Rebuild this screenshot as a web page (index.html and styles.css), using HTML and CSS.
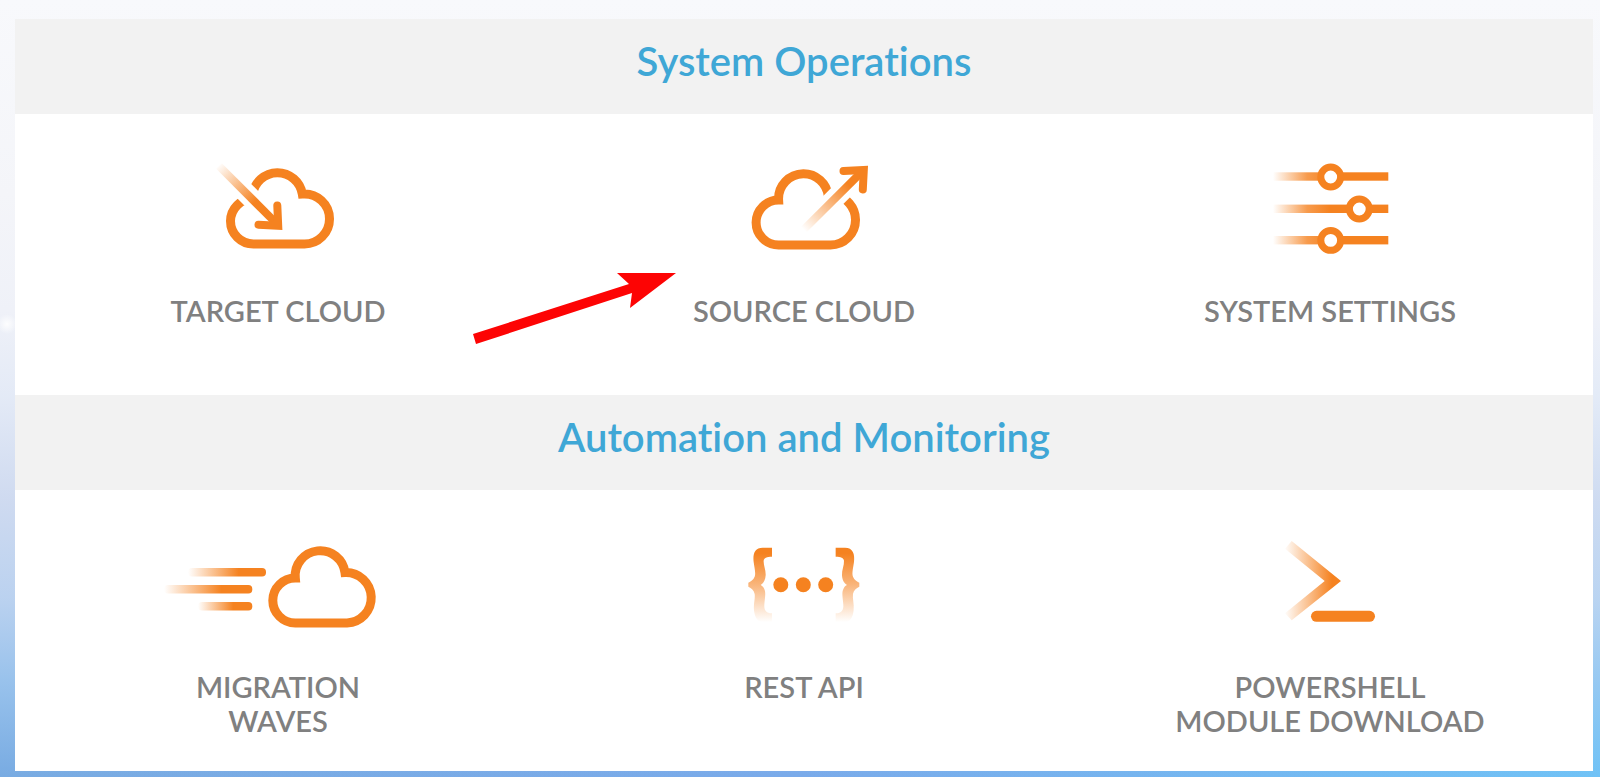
FILE: index.html
```
<!DOCTYPE html>
<html lang="en">
  <head>
    <meta charset="UTF-8" />
    <meta name="viewport" content="width=device-width, initial-scale=1.0" />
    <title>System Operations</title>
    <link rel="stylesheet" href="styles.css">
  </head>

  <body>
    <main class="panel">
      <!-- System Operations -->
      <section>
        <h2 class="section-title">System Operations</h2>
        <div class="tiles">
          <a class="tile" href="#target-cloud">
            <svg class="icon" viewBox="0 0 240 110" aria-hidden="true">
              <defs>
                <linearGradient id="arrow-in" gradientUnits="userSpaceOnUse" x1="60" y1="11" x2="97" y2="48">
                  <stop offset="0" stop-color="#f58220" stop-opacity="0" />
                  <stop offset="1" stop-color="#f58220" />
                </linearGradient>
              </defs>
              <path class="line" d="M95 44.5A23 23 0 0 0 72.5 67A23 23 0 0 0 95.5 90H146.5A25 25 0 0 0 171.5 65A25 25 0 0 0 144.3 40A25.3 25.3 0 0 0 119.3 18.7A25.3 25.3 0 0 0 94.5 41" />
              <!-- Gap for the arrow -->
              <path class="gap" d="M75 26L104 55" />
              <path d="M61 12L120 71" fill="none" stroke="url(#arrow-in)" stroke-width="8" />
              <path class="head" d="M119.3 51.5L120.2 71.8L100.5 70.7" />
            </svg>
            <span class="label">TARGET CLOUD</span>
          </a>

          <a class="tile" href="#source-cloud">
            <svg class="icon" viewBox="0 0 240 110" aria-hidden="true">
              <defs>
                <linearGradient id="arrow-out" gradientUnits="userSpaceOnUse" x1="120" y1="76" x2="165" y2="31">
                  <stop offset="0" stop-color="#f58220" stop-opacity="0" />
                  <stop offset="1" stop-color="#f58220" />
                </linearGradient>
              </defs>
              <path class="line" d="M150 41A25 25 0 0 1 171.5 66A25 25 0 0 1 146.5 91H94.6A22.5 22.5 0 0 1 94.6 46A25 25 0 0 1 119.3 19.7A25 25 0 0 1 144.3 42" />
              <!-- Gap for the arrow -->
              <path class="gap" d="M134 61.3L164 31.3" />
              <path d="M119.3 76L179 16.7" fill="none" stroke="url(#arrow-out)" stroke-width="8" />
              <path class="head" d="M159.5 17L179.8 16L178.8 35.5" />
            </svg>
            <span class="label">SOURCE CLOUD</span>
            <!-- Pointer to the tile -->
            <svg class="pointer" viewBox="0 0 208 76" aria-hidden="true">
              <path d="M2 64L158 14L146 3H205L159 38L161 23L5 74Z" fill="#fd0404" />
            </svg>
          </a>

          <a class="tile" href="#system-settings">
            <svg class="icon" viewBox="0 0 240 110" aria-hidden="true">
              <defs>
                <linearGradient id="slider" gradientUnits="userSpaceOnUse" x1="63" y1="0" x2="120" y2="0">
                  <stop offset="0" stop-color="#f58220" stop-opacity="0" />
                  <stop offset="0.6" stop-color="#f58220" stop-opacity="0.8" />
                  <stop offset="1" stop-color="#f58220" />
                </linearGradient>
              </defs>
              <g fill="url(#slider)">
                <rect x="63" y="18.3" width="115.3" height="8.4" />
                <rect x="63" y="50.6" width="115.3" height="8.4" />
                <rect x="63" y="82" width="115.3" height="8.4" />
              </g>
              <g class="knob">
                <circle cx="120.7" cy="23" r="9.9" />
                <circle cx="149.3" cy="55" r="9.9" />
                <circle cx="120.7" cy="86.4" r="9.9" />
              </g>
            </svg>
            <span class="label">SYSTEM SETTINGS</span>
          </a>
        </div>
      </section>

      <!-- Automation and Monitoring -->
      <section>
        <h2 class="section-title">Automation and Monitoring</h2>
        <div class="tiles">
          <a class="tile" href="#migration-waves">
            <svg class="icon" viewBox="0 0 240 110" aria-hidden="true">
              <defs>
                <linearGradient id="wave">
                  <stop offset="0" stop-color="#f58220" stop-opacity="0" />
                  <stop offset="0.65" stop-color="#f58220" />
                </linearGradient>
              </defs>
              <path class="line" d="M137.3 48A22.5 22.5 0 0 0 137.3 93H189A25.2 25.2 0 0 0 187 42.6A25 25 0 0 0 137.3 48Z" />
              <g fill="url(#wave)">
                <rect x="30" y="38" width="78" height="8.4" rx="4" />
                <rect x="6" y="55" width="88.3" height="8.4" rx="4" />
                <rect x="40" y="72" width="54.3" height="8.4" rx="4" />
              </g>
            </svg>
            <span class="label">MIGRATION<br />WAVES</span>
          </a>

          <a class="tile" href="#rest-api">
            <svg class="icon" viewBox="0 0 240 110" aria-hidden="true">
              <defs>
                <linearGradient id="brace" gradientUnits="userSpaceOnUse" x1="0" y1="70" x2="0" y2="276">
                  <stop offset="0" stop-color="#f58220" />
                  <stop offset="0.45" stop-color="#f58220" stop-opacity="0.6" />
                  <stop offset="1" stop-color="#f58220" stop-opacity="0" />
                </linearGradient>
                <path id="brace-shape" d="M156 53H128C104 53 98 72 101 96C103 112 108 130 104 140C100 150 92 154 85 158V170C94 174 102 180 104 192C106 206 100 222 102 240C104 262 112 276 130 276H156V250C138 250 132 240 133 224C134 208 138 190 134 180C131 172 128 168 122 165C130 160 136 152 137 136C138 120 130 106 131 92C132 84 140 80 156 80Z" />
              </defs>
              <g transform="translate(36 0) scale(0.3333)" fill="url(#brace)">
                <use href="#brace-shape" />
                <use href="#brace-shape" transform="translate(503 0) scale(-1 1)" />
              </g>
              <g fill="#f58220">
                <circle cx="96.8" cy="54.8" r="7.5" />
                <circle cx="119.3" cy="54.8" r="7.5" />
                <circle cx="141.7" cy="54.8" r="7.5" />
              </g>
            </svg>
            <span class="label">REST API</span>
          </a>

          <a class="tile" href="#powershell">
            <svg class="icon" viewBox="0 0 240 110" aria-hidden="true">
              <defs>
                <linearGradient id="prompt" gradientUnits="userSpaceOnUse" x1="74" y1="0" x2="122" y2="0">
                  <stop offset="0" stop-color="#f58220" stop-opacity="0" />
                  <stop offset="1" stop-color="#f58220" />
                </linearGradient>
              </defs>
              <path d="M81.7 11L131 51L81.7 90.3L75 83.3L114.7 51L75 18.7Z" fill="url(#prompt)" />
              <rect x="101" y="80.8" width="64" height="11" rx="5.5" fill="#f58220" />
            </svg>
            <span class="label">POWERSHELL<br />MODULE DOWNLOAD</span>
          </a>
        </div>
      </section>
    </main>
  </body>
</html>
```
FILE: styles.css
```
* {
  box-sizing: border-box;
}

body {
  margin: 0;
  min-height: 100vh;
  padding: 19px 7px 6px 15px;
  font-family: Lato, "Open Sans", sans-serif;
  font-variant-ligatures: none;
  /* Sky: white haze over blue, with a small star on the left */
  background:
    radial-gradient(circle at 7px 324px, rgba(255, 255, 255, 0.9), rgba(255, 255, 255, 0) 10px),
    linear-gradient(
      to bottom,
      rgb(248, 249, 252) 0%,
      rgb(244, 245, 249) 25%,
      rgb(239, 241, 248) 40%,
      rgba(231, 236, 247, 0.97) 51%,
      rgba(212, 221, 241, 0.95) 64%,
      rgba(194, 214, 241, 0.9) 77%,
      rgba(165, 203, 240, 0.7) 88%,
      rgba(140, 190, 238, 0) 100%
    ),
    linear-gradient(to right, #78abe2, #79aaea 50%, #6fc2f6);
}

.panel {
  background-color: #fff;
}

.section-title {
  margin: 0;
  padding: 18px 0 29px;
  background-color: #f2f2f2;
  color: #3fa7d6;
  font-size: 40px;
  font-weight: 600;
  line-height: 48px;
  text-align: center;
}

.tiles {
  display: grid;
  grid-template-columns: repeat(3, 1fr);
}

.tile {
  position: relative; /* Holds the pointer */
  display: flex;
  flex-direction: column;
  align-items: center;
  gap: 30px;
  padding: 40px 0 33px;
  color: #808080;
  text-decoration: none;
}

.icon {
  width: 240px;
  height: 110px;
}

.icon .line {
  fill: none;
  stroke: #f58220;
  stroke-width: 9;
}

.icon .gap {
  fill: none;
  stroke: #fff;
  stroke-width: 20;
}

.icon .head {
  fill: none;
  stroke: #f58220;
  stroke-width: 8;
  stroke-linecap: round;
}

.icon .knob {
  fill: #fff;
  stroke: #f58220;
  stroke-width: 7;
}

.label {
  min-height: 68px;
  font-size: 29px;
  font-weight: 600;
  line-height: 34px;
  text-align: center;
}

/* Red arrow, lies over the gap between two tiles */
.pointer {
  position: absolute;
  top: 156px;
  left: -70px;
  width: 208px;
  height: 76px;
}
```
